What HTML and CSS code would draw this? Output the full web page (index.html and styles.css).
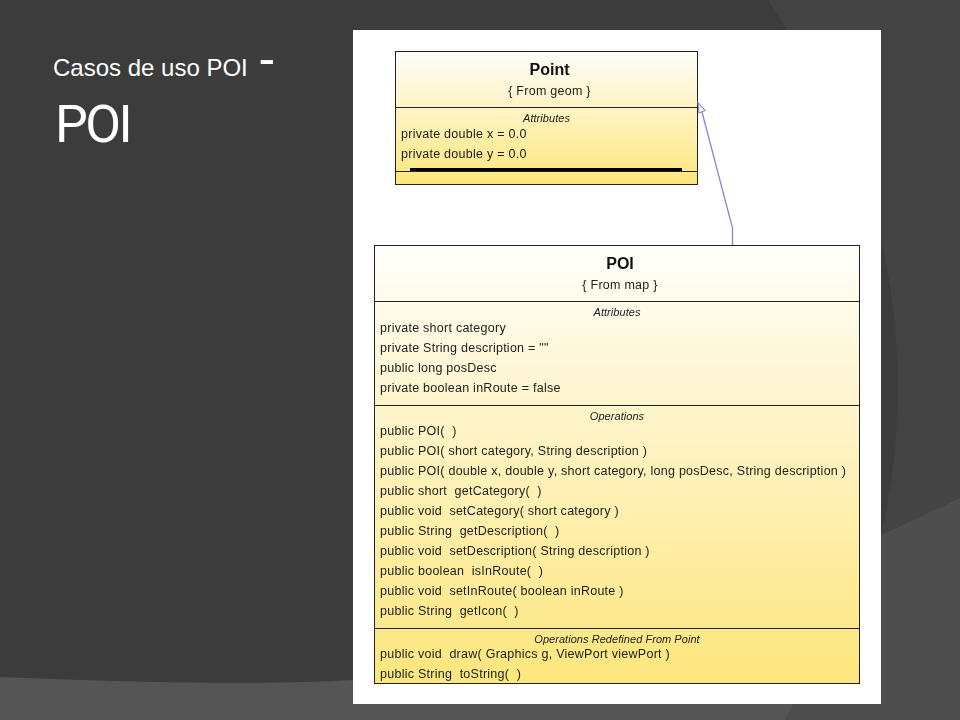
FILE: index.html
```html
<!DOCTYPE html>
<html lang="es">
<head>
<meta charset="utf-8">
<title>Casos de uso POI - POI</title>
<link rel="stylesheet" href="styles.css">
</head>
<body>
<main class="slide">
  <svg class="backdrop" width="960" height="720" viewBox="0 0 960 720" aria-hidden="true">
    <rect width="960" height="720" fill="#3c3c3c"/>
    <polygon points="768,0 960,0 960,498 881,535 881,30 787,30" fill="#444444"/>
    <path d="M881 240Q915 385 881 535Z" fill="#3c3c3c"/>
    <path d="M0 677C100 681 250 686 353 680L881 600V720H0Z" fill="#555555"/>
    <polygon points="793,704 881,704 881,535 960,498 960,720 785,720" fill="#4e4e4e"/>
  </svg>
  <section class="heading">
    <h1 class="title"><span class="kicker">Casos de uso POI <span class="dash">-</span></span> <span class="main-title">POI</span></h1>
  </section>
  <section class="panel">
    <svg class="link" width="528" height="674" viewBox="0 0 528 674" aria-hidden="true">
      <path d="M379.5 215V198L349 82" fill="none" stroke="#8585d6" stroke-width="1.3"/>
      <polygon points="345,72.5 352,80.5 346,83" fill="#fff" stroke="#8585d6" stroke-width="1.1"/>
    </svg>
    <article class="uml uml-point">
      <header class="uml-head">
        <div class="uml-name">Point</div>
        <div class="uml-from">{ From geom }</div>
      </header>
      <div class="uml-sec uml-sec-thick">
        <div class="uml-cap">Attributes</div>
        <div class="uml-row">private double x = 0.0</div>
        <div class="uml-row">private double y = 0.0</div>
      </div>
      <div class="uml-sec uml-empty"></div>
    </article>
    <article class="uml uml-poi">
      <header class="uml-head">
        <div class="uml-name">POI</div>
        <div class="uml-from">{ From map }</div>
      </header>
      <div class="uml-sec uml-attrs">
        <div class="uml-cap">Attributes</div>
        <div class="uml-row">private short category</div>
        <div class="uml-row">private String description = ""</div>
        <div class="uml-row">public long posDesc</div>
        <div class="uml-row">private boolean inRoute = false</div>
      </div>
      <div class="uml-sec uml-ops">
        <div class="uml-cap">Operations</div>
        <div class="uml-row">public POI(  )</div>
        <div class="uml-row">public POI( short category, String description )</div>
        <div class="uml-row">public POI( double x, double y, short category, long posDesc, String description )</div>
        <div class="uml-row">public short  getCategory(  )</div>
        <div class="uml-row">public void  setCategory( short category )</div>
        <div class="uml-row">public String  getDescription(  )</div>
        <div class="uml-row">public void  setDescription( String description )</div>
        <div class="uml-row">public boolean  isInRoute(  )</div>
        <div class="uml-row">public void  setInRoute( boolean inRoute )</div>
        <div class="uml-row">public String  getIcon(  )</div>
      </div>
      <div class="uml-sec uml-redef">
        <div class="uml-cap">Operations Redefined From Point</div>
        <div class="uml-row">public void  draw( Graphics g, ViewPort viewPort )</div>
        <div class="uml-row">public String  toString(  )</div>
      </div>
    </article>
  </section>
</main>
</body>
</html>
```
FILE: styles.css
```css
* { box-sizing: border-box; }
html, body { margin: 0; padding: 0; background: #3c3c3c; }
.slide {
  position: relative;
  width: 960px;
  height: 720px;
  overflow: hidden;
  display: flex;
  align-items: flex-start;
  font-family: "Liberation Sans", Arial, sans-serif;
}
.backdrop { position: absolute; left: 0; top: 0; }
.heading {
  position: relative;
  width: 353px;
  padding: 49px 0 0 53px;
  color: #fff;
}
.title { margin: 0; font-weight: 400; }
.kicker { display: block; font-size: 24px; line-height: 38px; white-space: nowrap; }
.dash { font-size: 50px; line-height: 0; margin-left: 4px; vertical-align: 1px; }
.main-title {
  display: block;
  margin: 7px 0 0 2px;
  font-family: Roboto, "Liberation Sans", sans-serif;
  font-weight: 400;
  font-size: 52px;
  line-height: 62px;
  letter-spacing: -2.5px;
}
.panel {
  position: relative;
  width: 528px;
  height: 674px;
  margin-top: 30px;
  background: #fff;
  padding: 21px;
}
.link { position: absolute; left: 0; top: 0; z-index: 1; }
.uml {
  border: 1px solid #222;
  background: linear-gradient(180deg, #fffefa 0%, #fde67c 100%);
  color: #222;
  font-size: 12.5px;
  letter-spacing: 0.26px;
  will-change: transform;
}
.uml-point { width: 303px; height: 134px; margin-left: 21px; margin-bottom: 60px; }
.uml-poi { width: 486px; height: 439px; }
.uml-head { height: 55px; padding: 7px 0 0 6px; text-align: center; }
.uml-name { font-size: 16px; font-weight: 700; line-height: 21px; letter-spacing: 0; color: #111; }
.uml-from { margin-top: 1px; line-height: 21px; }
.uml-sec { border-top: 1px solid #222; padding: 5px 5px 0; }
.uml-cap { font-size: 11px; font-style: italic; line-height: 10px; text-align: center; letter-spacing: 0.05px; }
.uml-sec-thick .uml-cap, .uml-attrs .uml-cap { margin-bottom: 1px; }
.uml-row { line-height: 20px; white-space: pre; }
.uml-sec-thick { position: relative; height: 64px; }
.uml-sec-thick::after {
  content: "";
  position: absolute;
  left: 14px;
  right: 15px;
  bottom: 0;
  height: 3px;
  background: #000;
}
.uml-empty { height: 13px; }
.uml-attrs { height: 104px; }
.uml-ops { height: 223px; }
.uml-redef { height: 55px; }
```
